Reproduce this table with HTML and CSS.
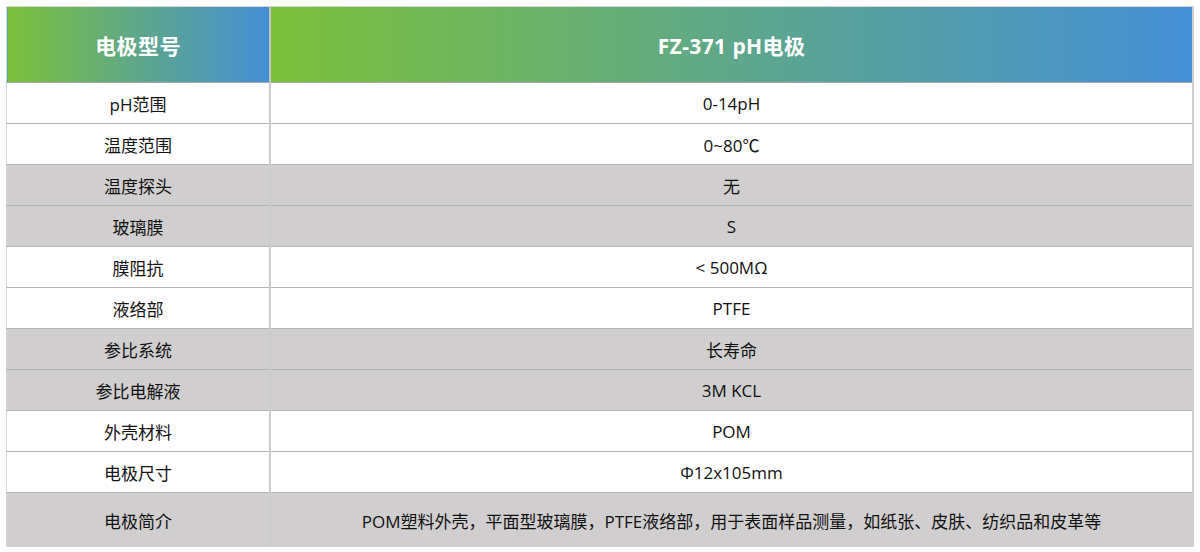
FILE: index.html
```html
<!DOCTYPE html>
<html lang="zh">
<head>
<meta charset="utf-8">
<link rel="stylesheet" href="styles.css">
</head>
<body>
<table class="spec">
  <thead>
    <tr>
      <th class="c1">电极型号</th>
      <th class="c2">FZ-371 pH电极</th>
    </tr>
  </thead>
  <tbody>
    <tr><td>pH范围</td><td>0-14pH</td></tr>
    <tr><td>温度范围</td><td>0~80℃</td></tr>
    <tr class="alt"><td>温度探头</td><td>无</td></tr>
    <tr class="alt"><td>玻璃膜</td><td>S</td></tr>
    <tr><td>膜阻抗</td><td>&lt; 500MΩ</td></tr>
    <tr><td>液络部</td><td>PTFE</td></tr>
    <tr class="alt"><td>参比系统</td><td>长寿命</td></tr>
    <tr class="alt"><td>参比电解液</td><td>3M KCL</td></tr>
    <tr><td>外壳材料</td><td>POM</td></tr>
    <tr><td>电极尺寸</td><td>Φ12x105mm</td></tr>
    <tr class="alt tall"><td>电极简介</td><td>POM塑料外壳，平面型玻璃膜，PTFE液络部，用于表面样品测量，如纸张、皮肤、纺织品和皮革等</td></tr>
  </tbody>
</table>
</body>
</html>
```

FILE: styles.css
```css
html, body {
  margin: 0;
  padding: 0;
  background: #ffffff;
}

body {
  padding: 6px 0 0 6px;
  font-family: "Open Sans", "Noto Sans CJK SC", sans-serif;
  color: #111111;
}

.spec {
  border-collapse: collapse;
  width: 1188px;
  table-layout: fixed;
  border-left: 1px solid #d6d6d6;
  border-right: 2px solid #d0d0d0;
  border-top: 1px solid #d6d6d6;
}

.spec th {
  height: 75px;
  padding: 0;
  color: #ffffff;
  font-size: 21px;
  font-weight: bold;
  letter-spacing: 0.4px;
  text-align: center;
  background: linear-gradient(to right, #7cc13a 0%, #5ea78a 50%, #448fd6 100%);
  border-bottom: 1px solid #a8a8a8;
}

.spec th.c1 {
  width: 262px;
  border-right: 2px solid #c4c4c4;
}

.spec td {
  height: 40px;
  padding: 0;
  font-size: 17px;
  text-align: center;
  border-bottom: 1px solid #b4b4b4;
  background: #ffffff;
}

.spec td:first-child {
  border-right: 2px solid #cccccc;
}

.spec tr.alt td {
  background: #d0cece;
}

.spec tr.tall td {
  height: 54px;
  border-bottom: none;
}
```
